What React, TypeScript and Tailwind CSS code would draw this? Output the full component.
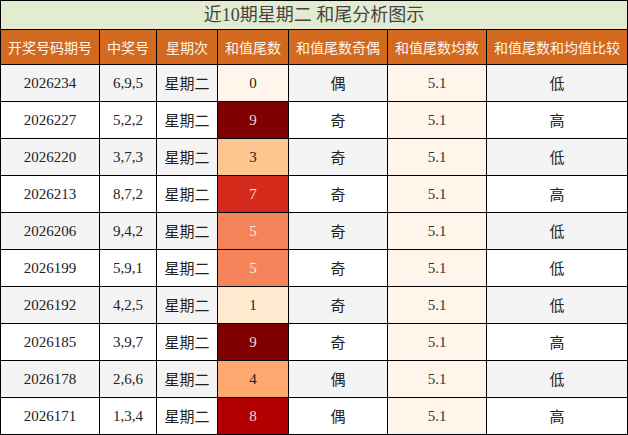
const rows = [
  { issue: "2026234", nums: "6,9,5", tail: 0, parity: "偶", cmp: "低" },
  { issue: "2026227", nums: "5,2,2", tail: 9, parity: "奇", cmp: "高" },
  { issue: "2026220", nums: "3,7,3", tail: 3, parity: "奇", cmp: "低" },
  { issue: "2026213", nums: "8,7,2", tail: 7, parity: "奇", cmp: "高" },
  { issue: "2026206", nums: "9,4,2", tail: 5, parity: "奇", cmp: "低" },
  { issue: "2026199", nums: "5,9,1", tail: 5, parity: "奇", cmp: "低" },
  { issue: "2026192", nums: "4,2,5", tail: 1, parity: "奇", cmp: "低" },
  { issue: "2026185", nums: "3,9,7", tail: 9, parity: "奇", cmp: "高" },
  { issue: "2026178", nums: "2,6,6", tail: 4, parity: "偶", cmp: "低" },
  { issue: "2026171", nums: "1,3,4", tail: 8, parity: "偶", cmp: "高" },
];

// heat colours for the tail digit
const tailStyle: Record<number, string> = {
  0: "bg-[#fff5eb] text-[#222]",
  1: "bg-[#feebcf] text-[#222]",
  3: "bg-[#fdc590] text-[#222]",
  4: "bg-[#fda86f] text-[#222]",
  5: "bg-[#f5845a] text-[#ffe9e0]",
  7: "bg-[#d42a1c] text-[#ffe0dc]",
  8: "bg-[#b00000] text-[#ffd9d9]",
  9: "bg-[#7f0000] text-[#f2d6d6]",
};

const headers = ["开奖号码期号", "中奖号", "星期次", "和值尾数", "和值尾数奇偶", "和值尾数均数", "和值尾数和均值比较"];

export default function App() {
  return (
    <div className="w-[628px] h-[435px] bg-white font-['Liberation_Serif','Noto_Sans_CJK_SC',serif]">
      <table className="w-[628px] table-fixed border-collapse">
        <colgroup>
          <col className="w-[99px]" />
          <col className="w-[57px]" />
          <col className="w-[61px]" />
          <col className="w-[71px]" />
          <col className="w-[99px]" />
          <col className="w-[99px]" />
          <col className="w-[141px]" />
        </colgroup>
        <tbody>
          <tr className="h-[29px]">
            <td colSpan={7} className="border border-black bg-[#e3ebd0] text-center text-[18px] leading-none text-[#444] p-0">
              近10期星期二 和尾分析图示
            </td>
          </tr>
          <tr className="h-[35px] bg-[#d2691e]">
            {headers.map((h) => (
              <td key={h} className="border border-black text-center text-[14px] text-[#fdf6f0] p-0 whitespace-nowrap font-['Noto_Sans_CJK_SC',sans-serif]">
                {h}
              </td>
            ))}
          </tr>
          {rows.map((r, i) => (
            <tr key={r.issue} className={`h-[37px] text-[15px] text-[#222] ${i % 2 === 0 ? "bg-[#f4f4f4]" : "bg-white"}`}>
              <td className="border border-black text-center p-0">{r.issue}</td>
              <td className="border border-black text-center p-0">{r.nums}</td>
              <td className="border border-black text-center p-0 font-['Noto_Sans_CJK_SC',sans-serif]">星期二</td>
              <td className={`border border-black text-center p-0 ${tailStyle[r.tail]}`}>{r.tail}</td>
              <td className="border border-black text-center p-0 font-['Noto_Sans_CJK_SC',sans-serif]">{r.parity}</td>
              <td className="border border-black text-center p-0 bg-[#fff5eb] text-[#333]">5.1</td>
              <td className="border border-black text-center p-0 font-['Noto_Sans_CJK_SC',sans-serif]">{r.cmp}</td>
            </tr>
          ))}
        </tbody>
      </table>
    </div>
  );
}
